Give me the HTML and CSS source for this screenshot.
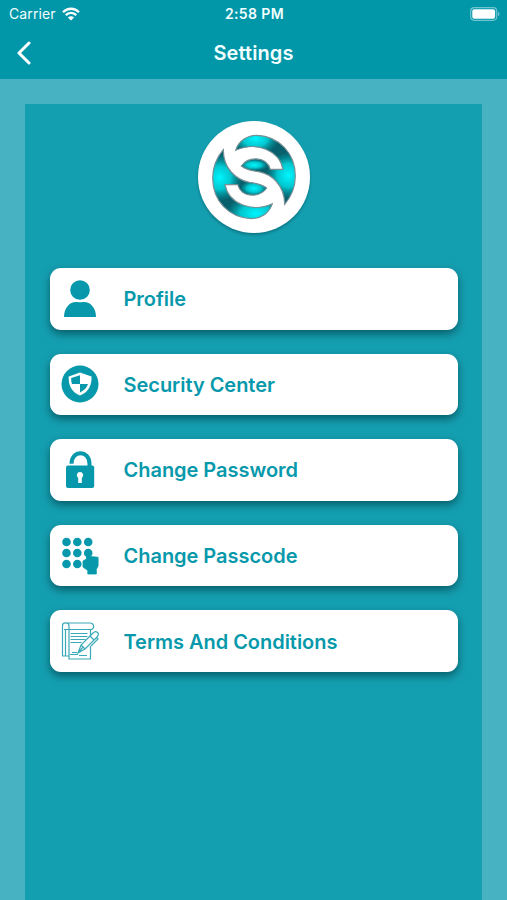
FILE: index.html
```html
<!DOCTYPE html>
<html lang="en">
<head>
    <meta charset="UTF-8">
    <meta name="viewport" content="width=device-width, initial-scale=1.0">
    <title>Settings</title>
    <link rel="stylesheet" href="styles.css">
</head>
<body>
    <header class="header">
        <div class="status-bar">
            <div class="carrier">
                <span>Carrier</span>
                <svg class="wifi" viewBox="0 0 18 14">
                    <path d="M1 5.2C5.5 .6 12.5 .6 17 5.2M3.8 8.1c3-3 7.4-3 10.4 0" fill="none" stroke="#fff" stroke-width="2.3"/>
                    <path d="M9 13.6L5.9 10.4c1.8-1.6 4.4-1.6 6.2 0z" fill="#fff"/>
                </svg>
            </div>
            <div class="time">2:58 PM</div>
            <svg class="battery" viewBox="0 0 30 14">
                <rect x=".7" y=".7" width="26" height="12.6" rx="3.5" fill="none" stroke="#6fc4cf" stroke-width="1.2"/>
                <rect x="2.3" y="2.3" width="22.8" height="9.4" rx="2" fill="#fff"/>
                <path d="M28 4.7c2 1 2 3.600 0 4.600z" fill="#6fc4cf"/>
            </svg>
        </div>
        <div class="nav-bar">
            <svg class="back" viewBox="0 0 16 24"><path d="M13 2L3 12l10 10" fill="none" stroke="#fff" stroke-width="3" stroke-linecap="round" stroke-linejoin="round"/></svg>
            <h1 class="title">Settings</h1>
        </div>
    </header>
    <main class="main">
        <div class="panel">
            <div class="logo">
                <svg viewBox="23 20 336 336">
                    <defs>
                        <radialGradient id="glow">
                            <stop offset="0" stop-color="#00f6ff"/>
                            <stop offset=".5" stop-color="#00e2ea" stop-opacity=".8"/>
                            <stop offset="1" stop-color="#00a5b0" stop-opacity="0"/>
                        </radialGradient>
                        <path id="half" d="M136 108C145 80 170 63 200 63C265 66 315 115 315 185C315 220 300 250 283 270C283 214 246 180 205 172C183 169 165 165 153 155C173 126 228 124 240 165L278 165C267 108 198 80 136 108Z"/>
                        <clipPath id="mark">
                            <use href="#half"/>
                            <use href="#half" transform="rotate(180 191 188)"/>
                        </clipPath>
                    </defs>
                    <g clip-path="url(#mark)">
                        <rect x="60" y="55" width="262" height="265" fill="#07606b"/>
                        <ellipse cx="195" cy="72" rx="72" ry="50" fill="url(#glow)"/>
                        <ellipse cx="294" cy="183" rx="66" ry="70" fill="url(#glow)"/>
                        <ellipse cx="88" cy="190" rx="66" ry="70" fill="url(#glow)"/>
                        <ellipse cx="196" cy="298" rx="90" ry="56" fill="url(#glow)"/>
                        <ellipse cx="191" cy="152" rx="44" ry="18" fill="url(#glow)"/>
                        <ellipse cx="191" cy="222" rx="42" ry="24" fill="url(#glow)"/>
                    </g>
                    <g fill="none" stroke="#789197" stroke-width="3.5">
                        <use href="#half"/>
                        <use href="#half" transform="rotate(180 191 188)"/>
                    </g>
                </svg>
            </div>
            <div class="menu">
                <div class="item">
                    <svg class="icon" viewBox="0 0 40 40">
                        <circle cx="20" cy="11" r="9.800"/>
                        <path d="M4 38c0-9 5.500-15 12-15h8c6.500 0 12 6 12 15z"/>
                        <path d="M10 21.800q10 2 20 0" fill="none" stroke="#fff" stroke-width="1"/>
                    </svg>
                    <span class="label">Profile</span>
                </div>
                <div class="item">
                    <svg class="icon" viewBox="0 0 40 40">
                        <circle cx="20" cy="20" r="18.500"/>
                        <path d="M20 8.500l11.500 4c.4 8-2.500 15.500-11.500 19C11 28 8.300 20.500 8.700 12.500z" fill="#fff"/>
                        <path d="M20 11.200V20h-8c-.7-2-.9-3.800-.8-5.900zM20 20h8c-1.300 3.800-3.800 6.500-8 8.500z"/>
                    </svg>
                    <span class="label">Security Center</span>
                </div>
                <div class="item">
                    <svg class="icon" viewBox="0 0 40 40">
                        <path d="M11.500 13.800C11.500 -.3 29.500 -.3 29.500 14v5" fill="none" stroke="#0799ab" stroke-width="4"/>
                        <rect x="6" y="15.500" width="28.200" height="22.500" rx="2"/>
                        <path d="M20 22a3.300 3.300 0 0 1 1.800 6v5h-3.600v-5A3.300 3.300 0 0 1 20 22z" fill="#fff"/>
                    </svg>
                    <span class="label">Change Password</span>
                </div>
                <div class="item">
                    <svg class="icon" viewBox="0 0 40 40">
                        <circle cx="6.500" cy="6" r="4.300"/><circle cx="17.300" cy="6" r="4.300"/><circle cx="28.200" cy="6" r="4.300"/>
                        <circle cx="6.500" cy="17" r="4.300"/><circle cx="17.300" cy="17" r="4.300"/><circle cx="28.200" cy="17" r="4.300"/>
                        <circle cx="6.500" cy="28" r="4.300"/><circle cx="17.300" cy="28" r="4.300"/>
                        <path d="M26.500 18h3.600v2.500l8 .8v8.500L36.300 33.500V38h-8.500v-3.500L23 31v-6l3.500-2z" stroke="#0799ab" stroke-width=".8" stroke-linejoin="round"/>
                    </svg>
                    <span class="label">Change Passcode</span>
                </div>
                <div class="item">
                    <svg class="icon terms-icon" viewBox="0 0 40 40">
                        <path d="M9 8V4.500C9 1 2.500 1 2.500 4.500V35H9M5.500 8v27M9 8v30h21.500V25M6 2h24c4 0 5 5 1.500 6.500H4M30.500 9v6"/>
                        <path d="M10.500 12.500h17M10.500 15.500h17M10.500 18.500h15M10.500 21.500h11M10 33.500h8M12 31.500h5M19 34.500h8"/>
                        <path d="M18 32l3-8 12-12c3-3 7 0 4.500 3.500L25 28zM21 24l4 4M30 15l4 4M18 32l5-6M36 16l2 2-7 7"/>
                    </svg>
                    <span class="label">Terms And Conditions</span>
                </div>
            </div>
        </div>
    </main>
</body>
</html>
```
FILE: styles.css
```css
*{
    box-sizing: border-box;
}
body{
    margin: 0;
    height: 900px;
    display: flex;
    flex-direction: column;
    overflow: hidden;
    background-color: #47b3c2;
    font-family: Inter, "Liberation Sans", sans-serif;
}
.header{
    height: 79px;
    flex: none;
    color: #f2feff;
    background-color: #0197a9;
}
.status-bar{
    display: grid;
    grid-template-columns: 1fr auto 1fr;
    align-items: center;
    height: 27px;
    padding: 0 7px 0 9px;
    font-size: 14px;
}
.carrier{
    display: flex;
    align-items: center;
    gap: 6px;
    letter-spacing: 0.1px;
}
.wifi{
    width: 18px;
    height: 14px;
}
.time{
    font-size: 14px;
    font-weight: 600;
    letter-spacing: 0.4px;
}
.battery{
    width: 30px;
    height: 14px;
    justify-self: end;
}
.nav-bar{
    display: grid;
    grid-template-columns: 1fr auto 1fr;
    align-items: center;
    height: 51px;
    padding: 0 15.5px;
}
.back{
    width: 16px;
    height: 24px;
}
.title{
    margin: 0;
    font-size: 20px;
    font-weight: 600;
    letter-spacing: 0.1px;
}
.main{
    flex: 1;
    padding: 24.5px 25px 0;
}
.panel{
    height: 100%;
    padding: 17.5px 24.5px 0;
    background-color: #149fb0;
}
.logo{
    width: 112px;
    height: 112px;
    margin: 0 auto;
    border-radius: 50%;
    background-color: #fff;
    box-shadow: 0 2px 3px rgba(0,60,70,0.4);
}
.logo svg{
    display: block;
    width: 112px;
    height: 112px;
}
.menu{
    display: flex;
    flex-direction: column;
    gap: 24px;
    margin-top: 35px;
}
.item{
    display: flex;
    align-items: center;
    gap: 23.5px;
    height: 61.6px;
    padding-left: 10.5px;
    border-radius: 11px;
    background-color: #fff;
    box-shadow: 0 4px 8px rgba(0,50,60,0.6);
}
.icon{
    width: 40px;
    height: 40px;
    fill: #0799ab;
}
.terms-icon{
    fill: none;
    stroke: #3ba9b7;
    stroke-width: 1.2;
}
.label{
    padding-top: 1px;
    color: #0799ab;
    font-size: 20px;
    font-weight: 600;
    letter-spacing: -0.03px;
}
```
